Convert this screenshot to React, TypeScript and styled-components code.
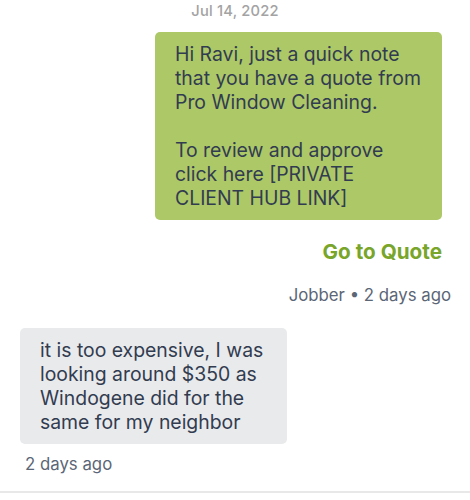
import React from "react";
import styled, { createGlobalStyle } from "styled-components";

const Global = createGlobalStyle`
  html, body { margin: 0; padding: 0; background: #ffffff; }
  body { font-family: Inter, "Noto Sans", "Liberation Sans", sans-serif; }
`;

const Thread = styled.div`
  width: 470px;
  display: flex;
  flex-direction: column;
  padding-top: 2px;
`;

const DateLabel = styled.div`
  align-self: center;
  font-size: 14.7px;
  line-height: 18px;
  font-weight: 500;
  color: #a3a3a3;
  letter-spacing: 0.2px;
`;

const Message = styled.div<{ $out?: boolean }>`
  display: flex;
  flex-direction: column;
  align-items: ${(p) => (p.$out ? "flex-end" : "flex-start")};
  padding: ${(p) => (p.$out ? "0 28px 0 0" : "0 0 0 20px")};
`;

const Bubble = styled.div<{ $out?: boolean }>`
  box-sizing: border-box;
  width: ${(p) => (p.$out ? "287px" : "267px")};
  padding: 10px 18px 10px 20px;
  border-radius: 5px;
  background: ${(p) => (p.$out ? "#adc867" : "#e9eaec")};
  color: #323c50;
  font-size: 19.4px;
  line-height: 24px;
  white-space: pre-line;
`;

const Action = styled.a`
  margin-top: 20px;
  font-size: 20.7px;
  line-height: 24px;
  font-weight: 700;
  color: #78a52a;
  text-decoration: none;
`;

const Meta = styled.div<{ $out?: boolean }>`
  font-size: 16.8px;
  line-height: 20px;
  color: #5b6676;
  margin-top: ${(p) => (p.$out ? "21px" : "10px")};
  margin-right: ${(p) => (p.$out ? "-9px" : "0")};
  margin-left: ${(p) => (p.$out ? "0" : "5px")};
`;

const Divider = styled.div`
  height: 2px;
  background: #e8e8e8;
  margin-top: 17px;
`;

export default function App() {
  return (
    <>
      <Global />
      <Thread>
        <DateLabel>Jul 14, 2022</DateLabel>
        <Message $out style={{ marginTop: 12 }}>
          <Bubble $out>
            {"Hi Ravi, just a quick note that you have a quote from Pro Window Cleaning.\n\nTo review and approve click here [PRIVATE CLIENT HUB LINK]"}
          </Bubble>
          <Action href="#">Go to Quote</Action>
          <Meta $out>Jobber • 2 days ago</Meta>
        </Message>
        <Message style={{ marginTop: 23 }}>
          <Bubble>
            it is too expensive, I was looking around $350 as Windogene did for the same for my neighbor
          </Bubble>
          <Meta>2 days ago</Meta>
        </Message>
        <Divider />
      </Thread>
    </>
  );
}
